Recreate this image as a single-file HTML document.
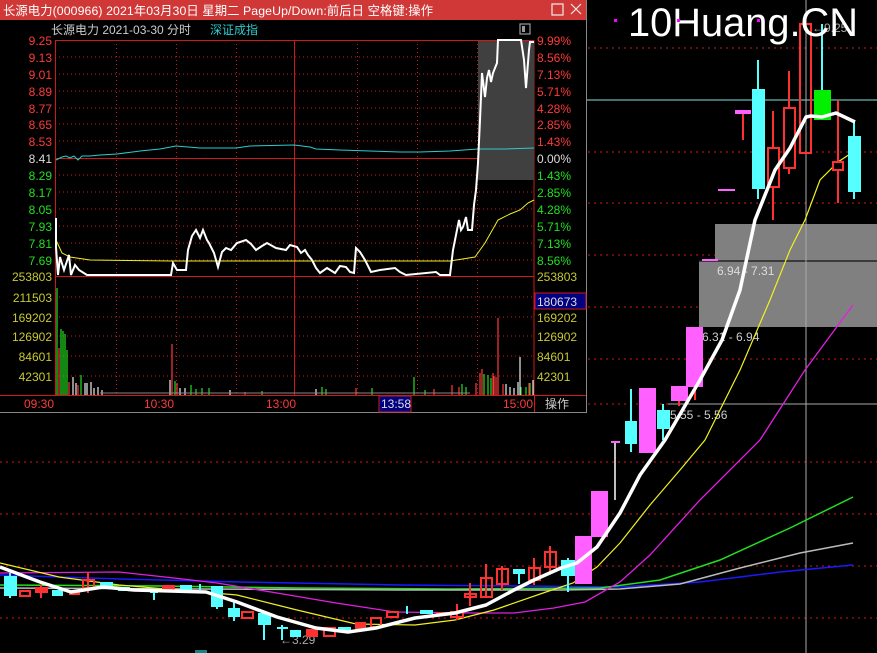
<!DOCTYPE html>
<html><head><meta charset="utf-8"><style>
html,body{margin:0;padding:0;background:#000;width:877px;height:653px;overflow:hidden}
svg{display:block}
text{font-family:"Liberation Sans","Noto Sans CJK SC",sans-serif}
</style></head><body>
<svg width="877" height="653" viewBox="0 0 877 653" xmlns="http://www.w3.org/2000/svg">
<g stroke="#d01818" stroke-width="1" stroke-dasharray="2,4">
<line x1="0" y1="48" x2="877" y2="48"/><line x1="0" y1="152" x2="877" y2="152"/><line x1="0" y1="203" x2="877" y2="203"/>
<line x1="0" y1="255" x2="877" y2="255"/><line x1="0" y1="307" x2="877" y2="307"/><line x1="0" y1="359" x2="877" y2="359"/>
<line x1="0" y1="404" x2="877" y2="404"/><line x1="0" y1="462" x2="877" y2="462"/><line x1="0" y1="514" x2="877" y2="514"/>
<line x1="0" y1="566" x2="877" y2="566"/><line x1="0" y1="618" x2="877" y2="618"/>
</g>
<rect x="715" y="224" width="162" height="37" fill="#808080"/>
<rect x="699" y="261" width="178" height="66" fill="#808080"/>
<line x1="699" y1="261" x2="877" y2="261" stroke="#222" stroke-width="1.5"/>
<line x1="668" y1="404" x2="877" y2="404" stroke="#aaa" stroke-width="1"/>
<text x="717" y="275" font-size="12" fill="#ddd">6.94 - 7.31</text>
<text x="702" y="341" font-size="12" fill="#ccc">6.31 - 6.94</text>
<text x="670" y="419" font-size="12" fill="#ccc">5.55 - 5.56</text>
<text x="812" y="32" font-size="12" fill="#aaa">←9.25</text>
<text x="280" y="644" font-size="12" fill="#aaa">←3.29</text>
<line x1="586" y1="100" x2="877" y2="100" stroke="#7fe8e8" stroke-width="1"/>
<line x1="806" y1="0" x2="806" y2="653" stroke="#aaa" stroke-width="1"/>
<polyline fill="none" stroke="#1a1aff" stroke-width="1.5" points="0,575 120,579 240,582 400,585 520,586 620,587 700,582 780,572 853,565"/>
<polyline fill="none" stroke="#20e020" stroke-width="1.5" points="0,585 160,586 300,588 450,589 600,588 660,580 720,560 790,528 853,497"/>
<polyline fill="none" stroke="#bbb" stroke-width="1.5" points="0,588 200,589 400,590 560,590 620,589 680,584 740,568 800,553 853,543"/>
<polyline fill="none" stroke="#e020e0" stroke-width="1.3" points="0,573 119,572 174,578 217,583 277,593 336,603 395,612 474,613 514,613 554,608 585,602 620,582 650,555 700,500 760,440 805,370 853,305"/>
<polyline fill="none" stroke="#f0f020" stroke-width="1.2" points="0,563 59,577 119,585 178,590 237,595 297,610 356,624 415,625 455,620 494,610 546,592 573,583 597,567 620,543 650,505 680,470 705,440 740,370 770,300 790,250 805,220 820,180 838,162 853,152"/>
<g stroke-width="2">
<g fill="#5ff" stroke="#5ff">
<line x1="10" y1="573" x2="10" y2="598"/><rect x="5" y="577" width="11" height="18"/>
<rect x="53" y="591" width="9" height="4"/>
<rect x="101" y="583" width="11" height="5"/>
<rect x="119" y="588" width="10" height="2"/>
<line x1="154" y1="588" x2="154" y2="600"/><line x1="150" y1="592" x2="158" y2="592"/>
<rect x="181" y="586" width="10" height="4"/>
<line x1="200" y1="584" x2="200" y2="590"/>
<line x1="217" y1="587" x2="217" y2="609"/><rect x="212" y="587" width="10" height="19"/>
<line x1="234" y1="600" x2="234" y2="621"/><rect x="229" y="609" width="10" height="7"/>
<line x1="264" y1="614" x2="264" y2="640"/><rect x="259" y="614" width="11" height="10"/>
<line x1="282" y1="625" x2="282" y2="640"/><line x1="277" y1="628" x2="288" y2="628"/>
<rect x="291" y="631" width="9" height="5"/>
<rect x="339" y="628" width="11" height="3"/>
<line x1="407" y1="606" x2="407" y2="614"/>
<rect x="421" y="611" width="11" height="2"/>
<line x1="519" y1="570" x2="519" y2="584"/><rect x="514" y="570" width="10" height="3"/>
<line x1="568" y1="558" x2="568" y2="592"/><rect x="562" y="561" width="12" height="14"/>
<line x1="631" y1="389" x2="631" y2="452"/><rect x="626" y="422" width="10" height="21"/>
<line x1="663" y1="404" x2="663" y2="440"/><rect x="658" y="411" width="11" height="17"/>
<line x1="758" y1="60" x2="758" y2="199"/><rect x="753" y="90" width="11" height="98"/>
<line x1="822" y1="24" x2="822" y2="90"/>
<line x1="854" y1="122" x2="854" y2="199"/><rect x="849" y="137" width="11" height="54"/>
</g>
<g fill="none" stroke="#ff3030">
<rect x="20" y="591" width="10" height="5"/>
<line x1="41" y1="585" x2="41" y2="598"/><rect x="36" y="588" width="11" height="4" fill="#ff3030"/>
<rect x="70" y="591" width="9" height="3" fill="#ff3030"/>
<line x1="88" y1="572" x2="88" y2="593"/><rect x="83" y="580" width="11" height="8"/>
<rect x="163" y="586" width="11" height="4" fill="#ff3030"/>
<rect x="242" y="612" width="11" height="6"/>
<rect x="307" y="630" width="10" height="6" fill="#ff3030"/>
<rect x="324" y="628" width="11" height="8"/>
<rect x="356" y="623" width="9" height="5" fill="#ff3030"/>
<rect x="371" y="618" width="10" height="9"/>
<rect x="387" y="612" width="11" height="5"/>
<rect x="437" y="613" width="13" height="1" fill="#ff3030"/>
<line x1="457" y1="604" x2="457" y2="620"/><rect x="451" y="612" width="12" height="5"/>
<line x1="470" y1="583" x2="470" y2="606"/><rect x="465" y="594" width="11" height="3"/>
<line x1="486" y1="564" x2="486" y2="597"/><rect x="481" y="578" width="11" height="19"/>
<line x1="502" y1="566" x2="502" y2="590"/><rect x="497" y="569" width="11" height="15"/>
<line x1="534" y1="558" x2="534" y2="585"/><rect x="529" y="568" width="11" height="12"/>
<line x1="550" y1="546" x2="550" y2="573"/><rect x="545" y="552" width="11" height="15"/>
<line x1="743" y1="114" x2="743" y2="140"/>
<line x1="773" y1="111" x2="773" y2="220"/><rect x="768" y="148" width="11" height="39" fill="#000"/>
<line x1="789" y1="71" x2="789" y2="174"/><rect x="784" y="108" width="11" height="60" fill="#000"/>
<rect x="800" y="24" width="11" height="129"/>
<line x1="838" y1="100" x2="838" y2="203"/><rect x="833" y="162" width="10" height="8" fill="#000"/>
<line x1="679" y1="401" x2="679" y2="406"/>
<line x1="695" y1="387" x2="695" y2="400"/>
</g>
<g fill="#ff60ff" stroke="none">
<rect x="575" y="536" width="17" height="48"/>
<rect x="591" y="491" width="17" height="46"/>
<rect x="639" y="388" width="17" height="65"/>
<rect x="671" y="386" width="17" height="15"/>
<rect x="686" y="327" width="17" height="60"/>
<rect x="702" y="259" width="16" height="2"/>
<rect x="718" y="189" width="17" height="2"/>
<rect x="735" y="110" width="16" height="4"/>
<rect x="611" y="441" width="9" height="2"/>
</g>
<line x1="615" y1="443" x2="615" y2="500" stroke="#fff" stroke-width="1.5"/>
<rect x="814" y="90" width="17" height="30" fill="#00f000" stroke="none"/>
</g>
<polyline fill="none" stroke="#fff" stroke-width="3.5" stroke-linejoin="round" points="0,567 40,582 71,592 103,587 134,590 206,592 237,602 277,617 316,628 348,632 376,628 415,618 455,613 486,605 514,590 534,580 561,568 577,563 597,547 620,513 640,475 665,440 700,380 722,340 740,290 755,220 775,170 790,148 806,117 811,116 822,117 836,113 855,122"/>
<text x="628" y="36" font-size="40" fill="#fff" font-family="DejaVu Sans,sans-serif" textLength="230" lengthAdjust="spacingAndGlyphs">10Huang.CN</text>
<rect x="614" y="19" width="3" height="3" fill="#f0f"/><rect x="677" y="19" width="3" height="3" fill="#f0f"/><rect x="757" y="19" width="3" height="3" fill="#f0f"/>
<rect x="195" y="650" width="12" height="3" fill="#1a8080"/>

<rect x="0" y="0" width="586" height="413" fill="#000"/>
<line x1="586.5" y1="0" x2="586.5" y2="413" stroke="#888"/>
<line x1="0" y1="412.5" x2="587" y2="412.5" stroke="#888"/>
<rect x="0" y="0" width="586" height="20" fill="#d03838"/>
<text x="3" y="15" font-size="12.3" fill="#fff" textLength="430" lengthAdjust="spacing">长源电力(000966) 2021年03月30日 星期二 PageUp/Down:前后日 空格键:操作</text>
<rect x="552" y="4" width="11" height="11" fill="none" stroke="#eee" stroke-width="1.2"/>
<path d="M571 4 L581 14 M581 4 L571 14" stroke="#eee" stroke-width="1.2"/>
<text x="51" y="34" font-size="12" fill="#ccc">长源电力  2021-03-30 分时</text>
<text x="210" y="34" font-size="12" fill="#2ecccc">深证成指</text>
<rect x="520" y="24" width="10" height="10" fill="none" stroke="#999" stroke-width="1.2"/><rect x="522" y="26" width="3" height="6" fill="#999"/>
<rect x="55.5" y="40.5" width="478.5" height="355" fill="none" stroke="#d01818"/>
<line x1="55" y1="158.5" x2="534" y2="158.5" stroke="#d01818"/>
<line x1="55" y1="276.5" x2="534" y2="276.5" stroke="#d01818"/>
<line x1="294.5" y1="40" x2="294.5" y2="395" stroke="#d01818"/>
<line x1="0" y1="395.5" x2="586" y2="395.5" stroke="#d01818"/>
<line x1="534.5" y1="395" x2="534.5" y2="412" stroke="#d01818"/>
<g stroke="#d01818" stroke-dasharray="1,3">
<line x1="116.5" y1="40" x2="116.5" y2="395"/><line x1="176.5" y1="40" x2="176.5" y2="395"/><line x1="236.5" y1="40" x2="236.5" y2="395"/>
<line x1="357.5" y1="40" x2="357.5" y2="395"/><line x1="417.5" y1="40" x2="417.5" y2="395"/><line x1="477.5" y1="40" x2="477.5" y2="395"/>
<line x1="55" y1="57" x2="534" y2="57"/><line x1="55" y1="74" x2="534" y2="74"/><line x1="55" y1="91" x2="534" y2="91"/>
<line x1="55" y1="108" x2="534" y2="108"/><line x1="55" y1="124" x2="534" y2="124"/><line x1="55" y1="141" x2="534" y2="141"/>
<line x1="55" y1="175" x2="534" y2="175"/><line x1="55" y1="192" x2="534" y2="192"/><line x1="55" y1="209" x2="534" y2="209"/>
<line x1="55" y1="226" x2="534" y2="226"/><line x1="55" y1="243" x2="534" y2="243"/><line x1="55" y1="260" x2="534" y2="260"/>
<line x1="55" y1="297" x2="534" y2="297"/><line x1="55" y1="317" x2="534" y2="317"/><line x1="55" y1="336" x2="534" y2="336"/>
<line x1="55" y1="356" x2="534" y2="356"/><line x1="55" y1="376" x2="534" y2="376"/>
</g>
<g font-size="12" text-anchor="end">
<g fill="#ff3a3a"><text x="52" y="45">9.25</text><text x="52" y="62">9.13</text><text x="52" y="79">9.01</text><text x="52" y="96">8.89</text><text x="52" y="113">8.77</text><text x="52" y="129">8.65</text><text x="52" y="146">8.53</text></g>
<text x="52" y="163" fill="#ddd">8.41</text>
<g fill="#20e020"><text x="52" y="180">8.29</text><text x="52" y="197">8.17</text><text x="52" y="214">8.05</text><text x="52" y="231">7.93</text><text x="52" y="248">7.81</text><text x="52" y="265">7.69</text></g>
<g fill="#c8c832"><text x="52" y="281">253803</text><text x="52" y="302">211503</text><text x="52" y="322">169202</text><text x="52" y="341">126902</text><text x="52" y="361">84601</text><text x="52" y="381">42301</text></g>
</g>
<g font-size="12">
<g fill="#ff3a3a"><text x="537" y="45">9.99%</text><text x="537" y="62">8.56%</text><text x="537" y="79">7.13%</text><text x="537" y="96">5.71%</text><text x="537" y="113">4.28%</text><text x="537" y="129">2.85%</text><text x="537" y="146">1.43%</text></g>
<text x="537" y="163" fill="#ddd">0.00%</text>
<g fill="#20e020"><text x="537" y="180">1.43%</text><text x="537" y="197">2.85%</text><text x="537" y="214">4.28%</text><text x="537" y="231">5.71%</text><text x="537" y="248">7.13%</text><text x="537" y="265">8.56%</text></g>
<g fill="#c8c832"><text x="537" y="281">253803</text><text x="537" y="322">169202</text><text x="537" y="341">126902</text><text x="537" y="361">84601</text><text x="537" y="381">42301</text></g>
</g>
<rect x="535" y="293" width="51" height="16" fill="#000080" stroke="#d01818"/>
<text x="537" y="306" font-size="12" fill="#ddd">180673</text>
<g font-size="12" fill="#ff3a3a"><text x="24" y="408">09:30</text><text x="144" y="408">10:30</text><text x="266" y="408">13:00</text><text x="503" y="408">15:00</text></g>
<rect x="379" y="396" width="32" height="16" fill="#000080" stroke="#d01818"/>
<text x="381" y="408" font-size="12" fill="#ddd">13:58</text>
<text x="545" y="408" font-size="12" fill="#ccc">操作</text>
<rect x="478" y="41" width="56" height="139" fill="#404040"/>
<polyline fill="none" stroke="#2ecccc" stroke-width="1" points="56,160 62,157 66,156 70,158 74,156 78,160 82,156 90,156 100,155 117,154 140,151 160,149 176,146 200,148 236,148 250,146 294,145 310,147 316,149 340,150 370,151 400,152 420,152 450,151 478,149 505,149 534,148"/>
<polyline fill="none" stroke="#f0f020" stroke-width="1" points="56,240 62,253 70,257 90,260 171,261 450,261 475,257 480,250 485,243 498,220 510,214 520,210 528,203 534,200"/>
<polyline fill="none" stroke="#fff" stroke-width="2" points="56,218 56,247 58,275 60,257 64,270 69,255 71,275 75,265 79,270 87,275 171,275 173,263 177,270 186,270 188,250 192,236 196,230 200,238 203,230 207,240 209,243 214,253 218,267 222,252 226,248 231,250 237,243 246,240 251,244 256,250 262,246 267,243 276,248 286,250 290,245 297,247 301,253 305,250 308,255 312,260 316,268 320,273 327,268 335,273 340,266 346,267 350,272 354,273 356,248 360,252 365,260 371,272 380,270 395,268 400,272 406,275 436,272 440,275 450,275 453,250 459,220 461,230 463,227 466,217 468,230 472,230 474,205 476,190 478,163 480,120 482,73 485,97 487,78 489,70 491,82 493,73 497,63 498,40 521,40 524,60 526,88 529,50 530,42 534,42"/>
<g stroke-width="1.2">
<g stroke="#20e020">
<line x1="57" y1="395" x2="57" y2="288"/><line x1="61" y1="395" x2="61" y2="329"/><line x1="63" y1="395" x2="63" y2="331"/><line x1="65" y1="395" x2="65" y2="334"/><line x1="67" y1="395" x2="67" y2="350"/><line x1="81" y1="395" x2="81" y2="375"/><line x1="175" y1="395" x2="175" y2="381"/><line x1="191" y1="395" x2="191" y2="385"/><line x1="196" y1="395" x2="196" y2="389"/><line x1="202" y1="395" x2="202" y2="388"/><line x1="209" y1="395" x2="209" y2="388"/><line x1="262" y1="395" x2="262" y2="391"/><line x1="322" y1="395" x2="322" y2="387"/><line x1="326" y1="395" x2="326" y2="389"/><line x1="372" y1="395" x2="372" y2="388"/><line x1="414" y1="395" x2="414" y2="377"/><line x1="425" y1="395" x2="425" y2="390"/><line x1="462" y1="395" x2="462" y2="384"/><line x1="466" y1="395" x2="466" y2="387"/><line x1="484" y1="395" x2="484" y2="374"/><line x1="488" y1="395" x2="488" y2="375"/><line x1="491" y1="395" x2="491" y2="378"/><line x1="521" y1="395" x2="521" y2="387"/><line x1="526" y1="395" x2="526" y2="387"/><line x1="530" y1="395" x2="530" y2="383"/>
</g>
<g stroke="#ff3a3a">
<line x1="59" y1="395" x2="59" y2="348"/><line x1="69" y1="395" x2="69" y2="382"/><line x1="78" y1="395" x2="78" y2="385"/><line x1="172" y1="395" x2="172" y2="344"/><line x1="177" y1="395" x2="177" y2="383"/><line x1="245" y1="395" x2="245" y2="392"/><line x1="356" y1="395" x2="356" y2="388"/><line x1="434" y1="395" x2="434" y2="389"/><line x1="452" y1="395" x2="452" y2="385"/><line x1="459" y1="395" x2="459" y2="387"/><line x1="476" y1="395" x2="476" y2="383"/><line x1="480" y1="395" x2="480" y2="373"/><line x1="482" y1="395" x2="482" y2="369"/><line x1="493" y1="395" x2="493" y2="373"/><line x1="496" y1="395" x2="496" y2="377"/><line x1="498" y1="395" x2="498" y2="318"/><line x1="494" y1="395" x2="494" y2="376"/><line x1="503" y1="395" x2="503" y2="384"/><line x1="529" y1="395" x2="529" y2="383"/>
</g>
<g stroke="#eee">
<line x1="73" y1="395" x2="73" y2="377"/><line x1="76" y1="395" x2="76" y2="383"/><line x1="85" y1="395" x2="85" y2="383"/><line x1="87" y1="395" x2="87" y2="383"/><line x1="91" y1="395" x2="91" y2="382"/><line x1="94" y1="395" x2="94" y2="388"/><line x1="98" y1="395" x2="98" y2="387"/><line x1="102" y1="395" x2="102" y2="390"/><line x1="170" y1="395" x2="170" y2="380"/><line x1="180" y1="395" x2="180" y2="388"/><line x1="185" y1="395" x2="185" y2="388"/><line x1="230" y1="395" x2="230" y2="390"/><line x1="316" y1="395" x2="316" y2="389"/><line x1="506" y1="395" x2="506" y2="384"/><line x1="510" y1="395" x2="510" y2="387"/><line x1="514" y1="395" x2="514" y2="388"/><line x1="518" y1="395" x2="518" y2="382"/><line x1="520" y1="395" x2="520" y2="357"/><line x1="533" y1="395" x2="533" y2="380"/>
</g>
<line x1="100" y1="393" x2="470" y2="393" stroke="#888" stroke-width="1"/>
</g>
</svg>
</body></html>
